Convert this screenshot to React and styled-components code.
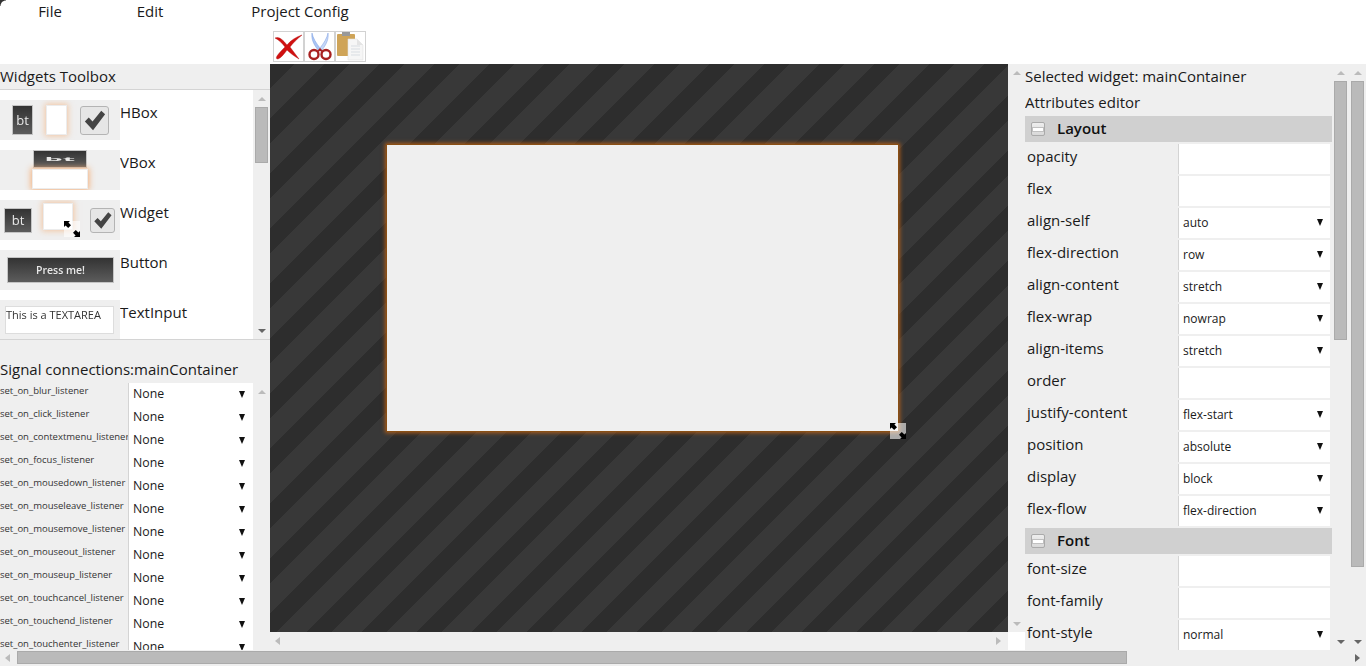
import React from "react";
import styled, { createGlobalStyle } from "styled-components";

const GlobalStyle = createGlobalStyle`
  html, body {
    margin: 0;
    padding: 0;
    height: 100%;
    overflow: hidden;
    background: #fff;
  }
  body {
    font-family: "Open Sans", "Noto Sans", sans-serif;
    color: #1a1a1a;
  }
  * { box-sizing: border-box; }
`;

const Page = styled.div`
  width: 1366px;
  height: 666px;
  display: flex;
  flex-direction: column;
  overflow: hidden;
  position: relative;
  /* rounded window corner at the top left */
  &::before {
    content: "";
    position: absolute;
    left: 0;
    top: 0;
    width: 6px;
    height: 6px;
    background: radial-gradient(circle at 6px 6px, transparent 5px, #333 6px);
  }
`;

const MenuBar = styled.div`
  height: 22px;
  display: flex;
  font-size: 15px;
  line-height: 22px;
`;

const MenuItem = styled.div`
  width: ${(p) => p.$w}px;
  text-align: center;
`;

const ToolBar = styled.div`
  height: 42px;
  padding: 9px 0 0 273px;
  display: flex;
`;

const ToolButton = styled.div`
  width: 31px;
  height: 31px;
  border: 1px solid #d2d2d2;
  background: #fff;
  svg {
    display: block;
    width: 29px;
    height: 29px;
  }
`;

const Main = styled.div`
  height: 586px;
  display: flex;
`;

const LeftColumn = styled.div`
  width: 270px;
  display: flex;
  flex-direction: column;
  background: #efefef;
`;

const PanelTitle = styled.div`
  height: 26px;
  font-size: 15px;
  line-height: 24px;
  border-bottom: 1px solid #d4d4d4;
  white-space: nowrap;
`;

const ToolboxWrap = styled.div`
  height: 250px;
  display: flex;
  border-bottom: 1px solid #d4d4d4;
`;

const ToolboxList = styled.div`
  width: 253px;
  background: #fff;
  padding-top: 10px;
  overflow: hidden;
`;

const ToolRow = styled.div`
  height: 40px;
  margin-bottom: 10px;
  display: flex;
`;

const Thumb = styled.div`
  width: 120px;
  height: 40px;
  background: #efefef;
  display: flex;
  align-items: ${(p) => p.$align || "center"};
  overflow: hidden;
  position: relative;
  padding-left: ${(p) => p.$pad || 0}px;
  gap: ${(p) => p.$gap || 0}px;
  flex-direction: ${(p) => p.$dir || "row"};
  & > * {
    filter: blur(0.35px);
  }
`;

const ToolLabel = styled.div`
  font-size: 15px;
  line-height: 20px;
  margin-top: 2px;
`;

const MiniButton = styled.div`
  width: ${(p) => p.$w}px;
  height: ${(p) => p.$h}px;
  flex: none;
  background: linear-gradient(#333, #5c5c5c);
  border: 1px solid #c4c4c4;
  color: #e8e8e8;
  font-size: ${(p) => p.$size || 13}px;
  font-weight: ${(p) => p.$weight || 400};
  display: flex;
  align-items: center;
  justify-content: center;
  overflow: hidden;
`;

const StretchedText = styled.span`
  transform: scale(3.2, 0.55);
  font-weight: 700;
`;

const MiniBox = styled.div`
  width: ${(p) => p.$w}px;
  height: ${(p) => p.$h}px;
  margin-top: ${(p) => p.$top || 0}px;
  flex: none;
  background: #fff;
  border: 1px solid #ececec;
  box-shadow: 0 0 6px 1px rgba(245, 170, 110, ${(p) => p.$glow || 0.6});
`;

const MiniCheck = styled.div`
  width: ${(p) => p.$s}px;
  height: ${(p) => p.$s}px;
  flex: none;
  background: #e6e6e6;
  border: 1px solid #b4b4b4;
  border-radius: 3px;
  svg {
    display: block;
    width: 100%;
    height: 100%;
  }
`;

const MiniTextArea = styled.div`
  width: 109px;
  height: 28px;
  flex: none;
  background: #fff;
  border: 1px solid #ddd;
  font-size: 11px;
  line-height: 16px;
  color: #333;
  white-space: nowrap;
  overflow: hidden;
`;

const ThumbHandle = styled.div`
  position: absolute;
  left: 64px;
  top: 21px;
  width: 16px;
  height: 16px;
  background: rgba(255, 255, 255, 0.6);
  svg {
    display: block;
  }
`;

const SignalSection = styled.div`
  flex: 1;
  min-height: 0;
  display: flex;
  flex-direction: column;
  padding-top: 18px;
`;

const SignalTitle = styled.div`
  height: 25px;
  font-size: 15px;
  line-height: 22px;
  white-space: nowrap;
`;

const SignalBody = styled.div`
  flex: 1;
  min-height: 0;
  display: flex;
`;

const SignalList = styled.div`
  width: 253px;
  overflow: hidden;
`;

const SignalRow = styled.div`
  height: 23px;
  display: flex;
`;

const SignalName = styled.div`
  width: 129px;
  flex: none;
  font-size: 9.5px;
  line-height: 15px;
  color: #333;
  white-space: nowrap;
  overflow: hidden;
  border-right: 1px solid #d4d4d4;
`;

const SignalSelect = styled.div`
  flex: 1;
  background: #fff;
  font-size: 12.3px;
  line-height: 21px;
  padding: 0 8px 0 4px;
  display: flex;
  justify-content: space-between;
  align-items: center;
  span {
    position: relative;
    top: -1px;
  }
`;

const Caret = styled.i`
  flex: none;
  width: 0;
  height: 0;
  border-left: 3.5px solid transparent;
  border-right: 3.5px solid transparent;
  border-top: 7px solid #111;
`;

const ScrollY = styled.div`
  width: 17px;
  flex: none;
  display: flex;
  flex-direction: column;
  align-items: center;
  background: #efefef;
  height: 100%;
`;

const ArrowUp = styled.i`
  flex: none;
  margin: 7px 0 3px;
  width: 0;
  height: 0;
  border-left: 4px solid transparent;
  border-right: 4px solid transparent;
  border-bottom: 4px solid #bbb;
`;

const ArrowDown = styled.i`
  flex: none;
  margin: auto 0 6px;
  width: 0;
  height: 0;
  border-left: 4px solid transparent;
  border-right: 4px solid transparent;
  border-top: 4px solid ${(p) => (p.$dark ? "#666" : "#bbb")};
`;

const ThumbY = styled.div`
  width: 13px;
  height: ${(p) => p.$h}px;
  margin-top: 3px;
  background: #bababa;
  border: 1px solid #aaa;
  flex: none;
`;

const ArrowLeft = styled.i`
  flex: none;
  width: 0;
  height: 0;
  border-top: 4px solid transparent;
  border-bottom: 4px solid transparent;
  border-right: 5px solid ${(p) => (p.$dark ? "#888" : "#bbb")};
`;

const ArrowRight = styled.i`
  flex: none;
  width: 0;
  height: 0;
  border-top: 4px solid transparent;
  border-bottom: 4px solid transparent;
  border-left: 5px solid ${(p) => (p.$dark ? "#666" : "#bbb")};
`;

const CenterColumn = styled.div`
  width: 755px;
  display: flex;
  flex-direction: column;
`;

const CenterTop = styled.div`
  height: 568px;
  display: flex;
`;

const Canvas = styled.div`
  width: 738px;
  position: relative;
  overflow: hidden;
  background: repeating-linear-gradient(
    135deg,
    #2d2d2d 0,
    #2d2d2d 17.2px,
    #383838 17.2px,
    #383838 38.89px
  );
`;

const MainContainer = styled.div`
  position: absolute;
  left: 117px;
  top: 81px;
  width: 511px;
  height: 286px;
  background: #efefef;
  box-shadow: 0 0 0 1px #8a4f14, 0 0 4px 2px rgba(210, 105, 20, 0.75);
`;

const ResizeHandle = styled.div`
  position: absolute;
  left: 620px;
  top: 359px;
  width: 16px;
  height: 16px;
  background: rgba(255, 255, 255, 0.6);
  svg {
    display: block;
  }
`;

const CenterBottom = styled.div`
  height: 18px;
  display: flex;
`;

const ScrollXCanvas = styled.div`
  width: 738px;
  background: #efefef;
  display: flex;
  justify-content: space-between;
  align-items: center;
  padding: 0 7px 0 5px;
`;

const Corner = styled.div`
  flex: 1;
  background: #fff;
`;

const RightColumn = styled.div`
  width: 341px;
  display: flex;
  background: #efefef;
`;

const Attributes = styled.div`
  width: 307px;
  overflow: hidden;
  flex: none;
`;

const AttrLine = styled.div`
  height: 26px;
  font-size: 15px;
  line-height: 24px;
  white-space: nowrap;
`;

const GroupHeader = styled.div`
  height: 26px;
  background: #d0d0d0;
  display: flex;
  align-items: center;
  margin-bottom: 2px;
  padding: 0 0 3px 6px;
  font-size: 15px;
  font-weight: 600;
  color: #111;
`;

const Collapse = styled.div`
  width: 14px;
  height: 14px;
  margin: 3px 12px 0 0;
  border: 1px solid #aaa;
  border-radius: 2px;
  background: linear-gradient(#eee, #d8d8d8);
  display: flex;
  align-items: center;
  justify-content: center;
  &::before {
    content: "";
    width: 10px;
    height: 3px;
    background: #fff;
    border: 1px solid #c0c0c0;
  }
`;

const AttrRow = styled.div`
  height: 32px;
  display: flex;
`;

const AttrName = styled.div`
  width: 153px;
  flex: none;
  font-size: 15px;
  line-height: 24px;
  padding-left: 2px;
  white-space: nowrap;
`;

const AttrField = styled.div`
  width: 152px;
  height: 30px;
  flex: none;
  background: #fff;
  border-left: 1px solid #d4d4d4;
  font-size: 12px;
  padding: 0 7px 1px 4px;
  display: flex;
  justify-content: space-between;
  align-items: center;
`;

const ScrollGroup = styled.div`
  display: flex;
  height: 100%;
`;

const ScrollX = styled.div`
  height: 16px;
  display: flex;
  align-items: center;
  background: #efefef;
  padding: 0 6px 0 5px;
`;

const ThumbX = styled.div`
  width: 1110px;
  height: 13px;
  margin: -2px 0 0 7px;
  background: #bababa;
  border: 1px solid #aaa;
`;

const signals = [
  "blur", "click", "contextmenu", "focus", "mousedown", "mouseleave",
  "mousemove", "mouseout", "mouseup", "touchcancel", "touchend", "touchenter",
];

const layoutAttrs = [
  ["opacity"], ["flex"], ["align-self", "auto"], ["flex-direction", "row"],
  ["align-content", "stretch"], ["flex-wrap", "nowrap"], ["align-items", "stretch"],
  ["order"], ["justify-content", "flex-start"], ["position", "absolute"],
  ["display", "block"], ["flex-flow", "flex-direction"],
];

const fontAttrs = [["font-size"], ["font-family"], ["font-style", "normal"]];

const CheckMark = () => (
  <svg viewBox="0 0 28 28">
    <path d="M4 15l4-4 4 4 9-11 4 3.5L12.500 24z" fill="#444" />
  </svg>
);

const ResizeArrows = () => (
  <svg width="16" height="16" viewBox="0 0 16 16">
    <path d="M0 0h6L4.400 1.600 7 4.200 4.200 7 1.600 4.400 0 6z" fill="#000" />
    <path d="M16 16h-6l1.600-1.600L9 11.800 11.800 9l2.600 2.600L16 10z" fill="#000" />
  </svg>
);

const DeleteIcon = () => (
  <svg viewBox="0 0 29 29">
    <path d="M1 6c4-2 8 2 12 7 4-5 9-8 15-10-5 4-9 8-12 12 3 4 6 8 9 12-5-3-9-6-12-9-3 4-6 8-9 9-2 0-2-1-1-3 2-3 5-6 8-9C8 11 5 8 1 6z" fill="#d01010" stroke="#b00a0a" strokeWidth=".4" />
  </svg>
);

const CutIcon = () => (
  <svg viewBox="0 0 29 29">
    <path d="M7 1c1 5 4 10 8 15l-2 2C9 13 6 7 7 1z" fill="#a9c4f4" stroke="#7d9fe0" strokeWidth=".5" />
    <path d="M23 1c-1 5-4 10-8 15l2 2c4-5 7-11 6-17z" fill="#c4d6f8" stroke="#7d9fe0" strokeWidth=".5" />
    <circle cx="9" cy="22.500" r="4.500" fill="none" stroke="#a82020" strokeWidth="2.400" />
    <circle cx="21" cy="22.500" r="4.500" fill="none" stroke="#a82020" strokeWidth="2.400" />
    <path d="M12 19l3-3 3 3-1 1-2-1-2 1z" fill="#a82020" />
  </svg>
);

const PasteIcon = () => (
  <svg viewBox="0 0 29 29">
    <rect x="1" y="2" width="18" height="22" rx="1" fill="#cfa458" />
    <rect x="6" y="0" width="8" height="4" fill="#999" />
    <path d="M12 7h9l6 6v15H12z" fill="#f6f6f6" stroke="#e2e2e2" strokeWidth=".6" />
    <path d="M21 7v6h6z" fill="#e4e4e4" />
    <path d="M15 14h9M15 17h9M15 20h9M15 23h9" stroke="#d8dde2" strokeWidth="1" />
  </svg>
);

const Row = ({ name, value }) => (
  <AttrRow>
    <AttrName>{name}</AttrName>
    <AttrField>
      {value && <span>{value}</span>}
      {value && <Caret />}
    </AttrField>
  </AttrRow>
);

export default function App() {
  return (
    <Page>
      <GlobalStyle />
      <MenuBar>
        <MenuItem $w={100}>File</MenuItem>
        <MenuItem $w={100}>Edit</MenuItem>
        <MenuItem $w={200}>Project Config</MenuItem>
      </MenuBar>
      <ToolBar>
        <ToolButton><DeleteIcon /></ToolButton>
        <ToolButton><CutIcon /></ToolButton>
        <ToolButton><PasteIcon /></ToolButton>
      </ToolBar>
      <Main>
        <LeftColumn>
          <PanelTitle>Widgets Toolbox</PanelTitle>
          <ToolboxWrap>
            <ToolboxList>
              <ToolRow>
                <Thumb $pad={12} $gap={13}>
                  <MiniButton $w={21} $h={30} $size={13}>bt</MiniButton>
                  <MiniBox $w={21} $h={30} />
                  <MiniCheck $s={29}><CheckMark /></MiniCheck>
                </Thumb>
                <ToolLabel>HBox</ToolLabel>
              </ToolRow>
              <ToolRow>
                <Thumb $dir="column" $pad={0}>
                  <MiniButton $w={54} $h={18} $size={9}><StretchedText>bt</StretchedText></MiniButton>
                  <MiniBox $w={56} $h={20} $top={1} $glow={0.9} />
                </Thumb>
                <ToolLabel>VBox</ToolLabel>
              </ToolRow>
              <ToolRow>
                <Thumb $pad={4}>
                  <MiniButton $w={28} $h={25} $size={13}>bt</MiniButton>
                  <MiniBox $w={30} $h={27} $top={-7} style={{ marginLeft: 11 }} />
                  <MiniCheck $s={25} style={{ marginLeft: 17 }}><CheckMark /></MiniCheck>
                  <ThumbHandle><ResizeArrows /></ThumbHandle>
                </Thumb>
                <ToolLabel>Widget</ToolLabel>
              </ToolRow>
              <ToolRow>
                <Thumb $pad={7}>
                  <MiniButton $w={107} $h={26} $size={10.500} $weight={600}>Press me!</MiniButton>
                </Thumb>
                <ToolLabel>Button</ToolLabel>
              </ToolRow>
              <ToolRow>
                <Thumb $pad={5}>
                  <MiniTextArea>This is a TEXTAREA</MiniTextArea>
                </Thumb>
                <ToolLabel>TextInput</ToolLabel>
              </ToolRow>
            </ToolboxList>
            <ScrollY>
              <ArrowUp />
              <ThumbY $h={56} />
              <ArrowDown $dark />
            </ScrollY>
          </ToolboxWrap>
          <SignalSection>
            <SignalTitle>Signal connections:mainContainer</SignalTitle>
            <SignalBody>
              <SignalList>
                {signals.map((s) => (
                  <SignalRow key={s}>
                    <SignalName>set_on_{s}_listener</SignalName>
                    <SignalSelect><span>None</span><Caret /></SignalSelect>
                  </SignalRow>
                ))}
              </SignalList>
              <ScrollY>
                <ArrowUp />
              </ScrollY>
            </SignalBody>
          </SignalSection>
        </LeftColumn>
        <CenterColumn>
          <CenterTop>
            <Canvas>
              <MainContainer />
              <ResizeHandle><ResizeArrows /></ResizeHandle>
            </Canvas>
            <ScrollY>
              <ArrowUp />
              <ArrowDown />
            </ScrollY>
          </CenterTop>
          <CenterBottom>
            <ScrollXCanvas>
              <ArrowLeft />
              <ArrowRight />
            </ScrollXCanvas>
            <Corner />
          </CenterBottom>
        </CenterColumn>
        <RightColumn>
          <Attributes>
            <AttrLine>Selected widget: mainContainer</AttrLine>
            <AttrLine>Attributes editor</AttrLine>
            <GroupHeader><Collapse />Layout</GroupHeader>
            {layoutAttrs.map(([name, value]) => <Row key={name} name={name} value={value} />)}
            <GroupHeader><Collapse />Font</GroupHeader>
            {fontAttrs.map(([name, value]) => <Row key={name} name={name} value={value} />)}
          </Attributes>
          <ScrollGroup>
            <ScrollY>
              <ArrowUp />
              <ThumbY $h={259} />
              <ArrowDown $dark />
            </ScrollY>
            <ScrollY>
              <ArrowUp />
              <ThumbY $h={486} />
              <ArrowDown $dark />
            </ScrollY>
          </ScrollGroup>
        </RightColumn>
      </Main>
      <ScrollX>
        <ArrowLeft />
        <ThumbX />
        <ArrowRight $dark style={{ marginLeft: "auto" }} />
      </ScrollX>
    </Page>
  );
}
